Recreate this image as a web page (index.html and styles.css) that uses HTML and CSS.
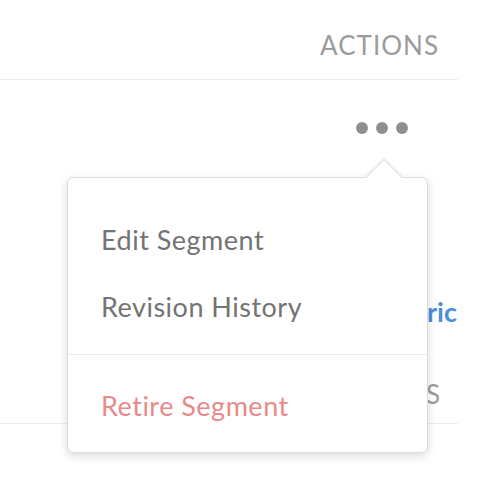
FILE: index.html
```html
<!DOCTYPE html>
<html>
<head>
<meta charset="utf-8">
<link rel="stylesheet" href="styles.css">
</head>
<body>
<div class="table">
  <div class="head">ACTIONS</div>
  <div class="row">
    <div class="dots"><span></span><span></span><span></span></div>
    <div class="link">View Metric</div>
    <div class="label">DETAILS</div>
  </div>
  <div class="popover">
    <div class="arrow"></div>
    <ul class="group first">
      <li class="item">Edit Segment</li>
      <li class="item">Revision History</li>
    </ul>
    <ul class="group last">
      <li class="item danger">Retire Segment</li>
    </ul>
  </div>
</div>
</body>
</html>
```

FILE: styles.css
```css
html, body {
  margin: 0;
  padding: 0;
  background: #ffffff;
}
body {
  font-family: Lato, "Open Sans", sans-serif;
  width: 492px;
  height: 480px;
  overflow: hidden;
}
.table {
  position: relative;
  width: 458px;
}
.head {
  box-sizing: border-box;
  height: 80px;
  padding: 30px 19px 0 0;
  text-align: right;
  font-size: 26px;
  line-height: 31px;
  color: #9b9b9b;
  letter-spacing: 1px;
  border-bottom: 1px solid #ececec;
}
.row {
  box-sizing: border-box;
  height: 344px;
  border-bottom: 1px solid #ececec;
  padding-top: 42px;
}
.dots {
  display: flex;
  justify-content: flex-end;
  gap: 8px;
  padding-right: 50px;
}
.dots span {
  width: 12px;
  height: 12px;
  border-radius: 50%;
  background: #8f8f8f;
}
.link {
  margin-top: 162px;
  text-align: right;
  font-size: 27px;
  line-height: 31px;
  font-weight: 700;
  color: #4a90d9;
  padding-right: 1px;
}
.label {
  margin-top: 52px;
  text-align: right;
  font-size: 26px;
  line-height: 31px;
  color: #9b9b9b;
  padding-right: 18px;
}
.popover {
  position: absolute;
  left: 67px;
  top: 177px;
  width: 361px;
  box-sizing: border-box;
  background: #ffffff;
  border: 1px solid #dcdcdc;
  border-radius: 6px;
  box-shadow: 0 3px 10px rgba(0, 0, 0, 0.15);
}
.arrow {
  position: absolute;
  left: 303px;
  top: -14px;
  width: 25px;
  height: 25px;
  background: #ffffff;
  border-top: 1px solid #dcdcdc;
  border-left: 1px solid #dcdcdc;
  transform: rotate(45deg);
  box-shadow: -2px -2px 4px rgba(0, 0, 0, 0.04);
}
.group {
  position: relative;
  list-style: none;
  margin: 0;
}
.group.first {
  padding: 28px 0 14px;
}
.group.last {
  padding: 17px 0 13px;
  border-top: 1px solid #ebebeb;
}
.item {
  padding: 18px 33px;
  font-size: 27px;
  line-height: 31px;
  letter-spacing: 0.5px;
  color: #737373;
}
.item.danger {
  color: #e8898a;
}
```
